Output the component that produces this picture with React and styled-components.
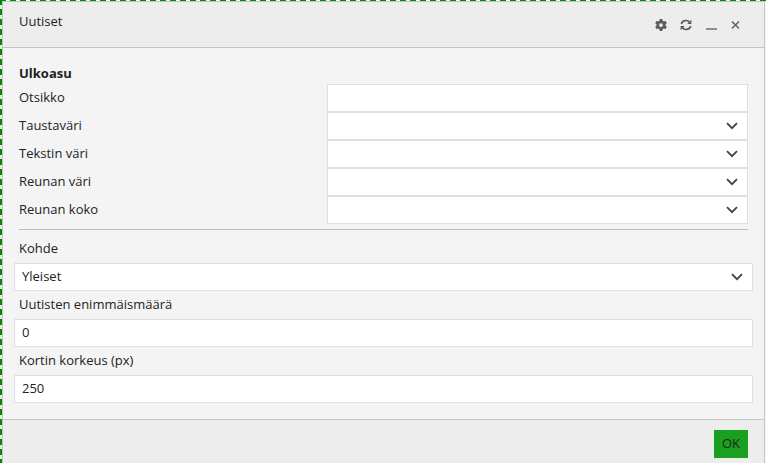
import React, { useState } from 'react';
import styled, { createGlobalStyle } from 'styled-components';

const COLORS = ['Punainen', 'Sininen', 'Vihreä'];
const SIZES = ['1', '2', '3'];

const ChevronIcon = () => (
  <svg width="12" height="8" viewBox="0 0 12 8" fill="none" stroke="#3f4448" strokeWidth="1.8">
    <path d="M1 1.2 L6 6.2 L11 1.2" />
  </svg>
);

const GearIcon = () => (
  <svg width="12" height="12" viewBox="0 0 512 512" fill="#5c5c5c">
    <path d="M495.9 166.6c3.2 8.7.5 18.4-6.4 24.6l-43.3 39.4c1.1 8.3 1.7 16.8 1.7 25.4s-.6 17.1-1.7 25.4l43.3 39.4c6.9 6.2 9.6 15.9 6.4 24.6-4.4 11.9-9.7 23.3-15.8 34.3l-4.7 8.1c-6.6 11-14 21.4-22.1 31.2-5.9 7.2-15.7 9.6-24.5 6.8l-55.7-17.7c-13.4 10.3-28.2 18.9-44 25.4l-12.5 57.1c-2 9.1-9 16.3-18.2 17.8-13.8 2.3-28 3.5-42.5 3.5s-28.7-1.2-42.5-3.5c-9.2-1.5-16.2-8.7-18.2-17.8l-12.5-57.1c-15.8-6.5-30.6-15.1-44-25.4L83.1 425.9c-8.8 2.8-18.6.3-24.5-6.8-8.1-9.8-15.5-20.2-22.1-31.2l-4.7-8.1c-6.1-11-11.4-22.4-15.8-34.3-3.2-8.7-.5-18.4 6.4-24.6l43.3-39.4C64.6 273.1 64 264.6 64 256s.6-17.1 1.7-25.4L22.4 191.2c-6.9-6.2-9.6-15.9-6.4-24.6 4.4-11.9 9.7-23.3 15.8-34.3l4.7-8.1c6.6-11 14-21.4 22.1-31.2 5.9-7.2 15.7-9.6 24.5-6.8l55.7 17.7c13.4-10.3 28.2-18.9 44-25.4l12.5-57.1c2-9.1 9-16.3 18.2-17.8C227.3 1.2 241.5 0 256 0s28.7 1.2 42.5 3.5c9.2 1.5 16.2 8.7 18.2 17.8l12.5 57.1c15.8 6.5 30.6 15.1 44 25.4l55.7-17.7c8.8-2.8 18.6-.3 24.5 6.8 8.1 9.8 15.5 20.2 22.1 31.2l4.7 8.1c6.1 11 11.4 22.4 15.8 34.3zM256 336a80 80 0 1 0 0-160 80 80 0 1 0 0 160z" />
  </svg>
);

const RefreshIcon = () => (
  <svg width="12" height="12" viewBox="0 0 12 12" fill="none" stroke="#5c5c5c" strokeWidth="1.6">
    <path d="M1.3 5 A4.7 4.2 0 0 1 9.8 3.4" />
    <path d="M10.7 7 A4.7 4.2 0 0 1 2.2 8.6" />
    <path d="M11.4 0.8 V5 H7.2 Z" fill="#5c5c5c" stroke="none" />
    <path d="M0.6 11.2 V7 H4.8 Z" fill="#5c5c5c" stroke="none" />
  </svg>
);

const MinimizeIcon = () => (
  <svg width="12" height="12" viewBox="0 0 12 12" fill="#8f8f8f">
    <rect x="1" y="9" width="11" height="2" />
  </svg>
);

const CloseIcon = () => (
  <svg width="12" height="12" viewBox="0 0 12 12" fill="none" stroke="#5c5c5c" strokeWidth="1.4">
    <path d="M2 2.5 L9 9.5 M9 2.5 L2 9.5" />
  </svg>
);

const SelectField = ({ id, options }) => {
  const [value, setValue] = useState(options[0]);
  return (
    <SelectWrapper>
      <Select id={id} value={value} onChange={e => setValue(e.target.value)}>
        {options.map(option => (
          <option key={option} value={option}>{option}</option>
        ))}
      </Select>
      <Arrow><ChevronIcon /></Arrow>
    </SelectWrapper>
  );
};

const App = () => (
  <>
    <GlobalStyle />
    <DropZone>
      <Dialog>
        <Header>
          <Title>Uutiset</Title>
          <Tools>
            <ToolButton aria-label="Asetukset"><GearIcon /></ToolButton>
            <ToolButton aria-label="Päivitä"><RefreshIcon /></ToolButton>
            <ToolButton aria-label="Pienennä"><MinimizeIcon /></ToolButton>
            <ToolButton aria-label="Sulje"><CloseIcon /></ToolButton>
          </Tools>
        </Header>
        <Body>
          <Section>
            <SectionTitle>Ulkoasu</SectionTitle>
            <Row>
              <Label htmlFor="title">Otsikko</Label>
              <Input id="title" type="text" />
            </Row>
            <Row>
              <Label htmlFor="background">Taustaväri</Label>
              <SelectField id="background" options={['', ...COLORS]} />
            </Row>
            <Row>
              <Label htmlFor="color">Tekstin väri</Label>
              <SelectField id="color" options={['', ...COLORS]} />
            </Row>
            <Row>
              <Label htmlFor="borderColor">Reunan väri</Label>
              <SelectField id="borderColor" options={['', ...COLORS]} />
            </Row>
            <Row>
              <Label htmlFor="borderSize">Reunan koko</Label>
              <SelectField id="borderSize" options={['', ...SIZES]} />
            </Row>
          </Section>
          <Divider />
          <Stack>
            <StackLabel htmlFor="target">Kohde</StackLabel>
            <SelectField id="target" options={['Yleiset']} />
            <StackLabel htmlFor="maxCount">Uutisten enimmäismäärä</StackLabel>
            <Input id="maxCount" type="text" defaultValue="0" />
            <StackLabel htmlFor="cardHeight">Kortin korkeus (px)</StackLabel>
            <Input id="cardHeight" type="text" defaultValue="250" />
          </Stack>
        </Body>
        <Footer>
          <OkButton>OK</OkButton>
        </Footer>
      </Dialog>
    </DropZone>
  </>
);

export default App;

const GlobalStyle = createGlobalStyle`
  * {
    box-sizing: border-box;
  }

  body {
    margin: 0;
    overflow: hidden;
    background: #f8f8f8;
    color: #222;
    font-family: 'Open Sans', sans-serif;
    font-size: 13px;
  }

  button, input, select {
    font: inherit;
    color: inherit;
  }
`;

const DropZone = styled.div`
  padding: 1px 1px 0 2px;
  background:
    repeating-linear-gradient(90deg, #008a00 0 6px, #fff 6px 10px) top / 100% 1px no-repeat,
    repeating-linear-gradient(180deg, #008a00 0 5px, #eee 5px 9px, #008a00 9px 10px) left / 2px 100% no-repeat;
`;

const Dialog = styled.div`
  display: flex;
  flex-direction: column;
  min-height: 100vh;
  border: 1px solid #c3c3c3;
  background: #f4f4f4;
`;

const Header = styled.header`
  display: flex;
  align-items: center;
  justify-content: space-between;
  height: 46px;
  padding: 0 22px 0 16px;
  border-bottom: 1px solid #c3c3c3;
  background: #ededed;
`;

const Title = styled.h1`
  margin: 0;
  padding-bottom: 8px;
  font-size: 13px;
  font-weight: 400;
`;

const Tools = styled.div`
  display: flex;
  gap: 13px;
`;

const ToolButton = styled.button`
  display: flex;
  padding: 0;
  border: 0;
  background: none;
  cursor: pointer;
`;

const Body = styled.div`
  padding: 15px 11px 16px;
`;

const Section = styled.section`
  padding: 0 5px;
`;

const SectionTitle = styled.h2`
  margin: 0;
  font-size: 13px;
  font-weight: 700;
  line-height: 21px;
`;

const Row = styled.div`
  display: grid;
  grid-template-columns: 11fr 15fr;
  align-items: center;
`;

const Label = styled.label`
  padding-bottom: 2px;
  line-height: 26px;
`;

const StackLabel = styled(Label)`
  padding: 0 5px 2px;
`;

const Divider = styled.hr`
  margin: 5px;
  border: 0;
  border-top: 1px solid #bdbdbd;
`;

const Stack = styled.div`
  display: flex;
  flex-direction: column;
`;

const Input = styled.input`
  width: 100%;
  height: 28px;
  padding: 0 7px 2px;
  border: 1px solid #dddfe5;
  border-radius: 0;
  background: #fff;
  outline: none;

  &:focus {
    border-color: #1aa01f;
  }
`;

const SelectWrapper = styled.div`
  position: relative;
`;

const Select = styled(Input).attrs({ as: 'select' })`
  display: block;
  appearance: none;
`;

const Arrow = styled.span`
  position: absolute;
  top: 10px;
  right: 10px;
  display: flex;
  pointer-events: none;
`;

const Footer = styled.footer`
  display: flex;
  flex: 1;
  align-items: flex-start;
  justify-content: flex-end;
  padding: 10px 16px;
  border-top: 1px solid #c3c3c3;
  background: #ededed;
`;

const OkButton = styled.button`
  height: 28px;
  padding: 0 8px 2px;
  border: 0;
  background: #1aa01f;
  cursor: pointer;
`;
